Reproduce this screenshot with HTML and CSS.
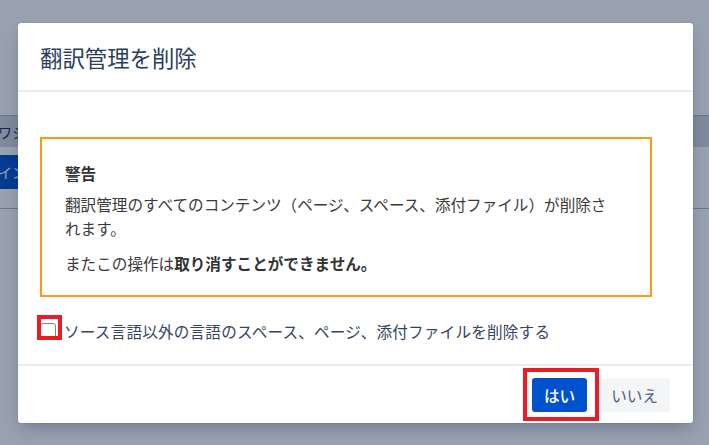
FILE: index.html
```html
<!DOCTYPE html>
<html lang="ja">
<head>
<meta charset="utf-8">
<title>翻訳管理を削除</title>
<link rel="stylesheet" href="styles.css">
</head>
<body>
<div class="page">
  <div class="bg-table">
    <div class="bg-head"><span class="bg-head-text">ワシ</span></div>
    <div class="bg-row"><span class="bg-sel">イン</span></div>
  </div>
</div>
<div class="blanket"></div>
<div class="modal" role="dialog">
  <header class="modal-header"><h1 class="modal-title">翻訳管理を削除</h1></header>
  <div class="modal-body">
    <div class="warning">
      <h2 class="warning-title">警告</h2>
      <p class="warning-text">翻訳管理のすべてのコンテンツ（ページ、スペース、添付ファイル）が削除されます。</p>
      <p class="warning-text">またこの操作は<strong>取り消すことができません。</strong></p>
    </div>
    <label class="check-row">
      <span class="checkbox"></span>
      <span class="check-label">ソース言語以外の言語のスペース、ページ、添付ファイルを削除する</span>
    </label>
  </div>
  <footer class="modal-footer">
    <button class="btn btn-primary">はい</button>
    <button class="btn btn-subtle">いいえ</button>
  </footer>
</div>
</body>
</html>
```
FILE: styles.css
```css
html, body {
  margin: 0;
  padding: 0;
}
body {
  width: 709px;
  height: 445px;
  overflow: hidden;
  position: relative;
  background: #ffffff;
  font-family: "Noto Sans CJK JP", "Noto Sans", sans-serif;
}
.page {
  height: 445px;
  padding-top: 115px;
  box-sizing: border-box;
}
.bg-head {
  border-top: 1px solid #b3b9c4;
  height: 31px;
  background: #d4d7dd;
  display: flex;
  align-items: center;
  font-size: 14px;
  color: #172b4d;
}
.bg-head-text {
  margin-left: -2px;
}
.bg-row {
  height: 62px;
  border-bottom: 1px solid #b3b9c4;
  padding-top: 8px;
  box-sizing: border-box;
}
.bg-sel {
  display: flex;
  align-items: center;
  width: 60px;
  height: 34px;
  background: #0052cc;
  color: #ffffff;
  font-size: 14px;
  text-indent: -2px;
}
.blanket {
  position: absolute;
  inset: 0;
  background: rgba(9, 30, 66, 0.42);
}
.modal {
  position: absolute;
  left: 18px;
  top: 23px;
  width: 675px;
  background: #ffffff;
  border-radius: 3px;
  box-shadow: 0 8px 16px -4px rgba(9, 30, 66, 0.3), 0 0 1px rgba(9, 30, 66, 0.31);
}
.modal-header {
  height: 69px;
  box-sizing: border-box;
  border-bottom: 2px solid #ebecf0;
  padding-left: 22px;
  display: flex;
  align-items: center;
}
.modal-title {
  margin: 0;
  font-size: 22.4px;
  font-weight: 400;
  line-height: 30px;
  color: #2b3d5c;
}
.modal-body {
  padding: 45px 22px 21px 22px;
}
.warning {
  width: 612px;
  box-sizing: border-box;
  border: 2px solid #f89a1c;
  padding: 22px 30px 20px 23px;
  color: #3a3a3a;
  font-size: 15.6px;
  line-height: 24px;
}
.warning-title {
  margin: 0 0 7px 0;
  font-size: 15.6px;
  font-weight: 700;
  line-height: 24px;
  color: #333333;
}
.warning-text {
  margin: 0;
}
.warning-text + .warning-text {
  margin-top: 11px;
}
.warning-text strong {
  font-weight: 700;
  color: #333333;
}
.check-row {
  margin-top: 22px;
  height: 24px;
  display: flex;
  align-items: center;
  gap: 8px;
  font-size: 15.6px;
  color: #344563;
}
.checkbox {
  position: relative;
  width: 16px;
  height: 16px;
  box-sizing: border-box;
  border: 1.5px solid #7a869a;
  border-radius: 3px;
  background: #ffffff;
  flex: none;
}
.checkbox::after {
  content: "";
  position: absolute;
  left: -4.5px;
  top: -9.5px;
  width: 25px;
  height: 25px;
  box-sizing: border-box;
  border: 4px solid #ec1c24;
}
.check-label {
  line-height: 24px;
  letter-spacing: 0.2px;
}
.modal-footer {
  border-top: 2px solid #ebecf0;
  display: flex;
  justify-content: flex-end;
  gap: 12px;
  padding: 12px 23px 11px 23px;
}
.btn {
  position: relative;
  height: 34px;
  padding: 0 12px;
  border: none;
  border-radius: 3px;
  font-family: "Noto Sans CJK JP", "Noto Sans", sans-serif;
  font-size: 15.6px;
  line-height: 34px;
}
.btn-primary {
  background: #0052cc;
  color: #ffffff;
  font-weight: 500;
}
.btn-primary::after {
  content: "";
  position: absolute;
  left: -9px;
  top: -10px;
  right: -12px;
  bottom: -9px;
  border: 4px solid #ec1c24;
}
.btn-subtle {
  background: #f4f5f7;
  color: #505f79;
}
```
